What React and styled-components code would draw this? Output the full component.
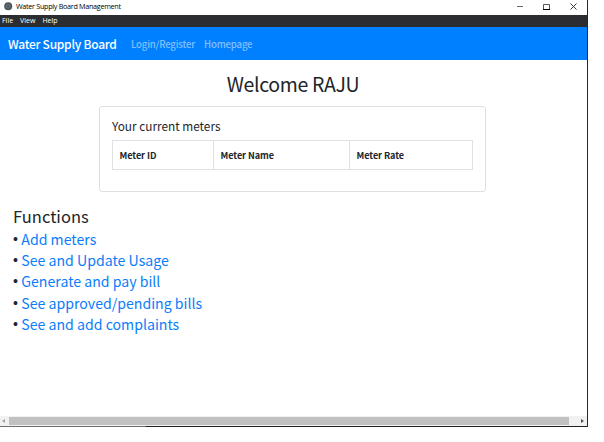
import React from "react";
import styled, { createGlobalStyle } from "styled-components";

const GlobalStyle = createGlobalStyle`
  * { box-sizing: border-box; }
  body {
    margin: 0;
    background: #fff;
    color: #212529;
    font-family: "Noto Sans CJK SC", "Noto Sans", sans-serif;
    overflow: hidden;
  }
`;

const AppWindow = styled.div`
  width: 588px;
  height: 427px;
  display: flex;
  flex-direction: column;
  background: #fff;
  border-right: 1px solid #25272b;
`;

const TitleBar = styled.header`
  height: 15px;
  flex: none;
  display: flex;
  align-items: center;
  padding: 0 9px 3px 4px;
  color: #000;
  font: 7.2px/12px "Open Sans", sans-serif;
  letter-spacing: -0.29px;
`;

const Title = styled.span`
  flex: 1;
  margin-left: 3px;
`;

const Controls = styled.div`
  display: flex;
  gap: 18px;
  svg { display: block; }
`;

const MenuBar = styled.nav`
  height: 12px;
  flex: none;
  display: flex;
  gap: 7px;
  padding-left: 2px;
  background: #2b2d30;
  color: #fff;
  font: 7px/12px "Open Sans", sans-serif;
`;

const NavBar = styled.nav`
  height: 33px;
  flex: none;
  display: flex;
  align-items: center;
  padding-left: 8px;
  background: #0080ff;
`;

const Brand = styled.span`
  width: 123px;
  color: #fff;
  font-size: 12px;
  font-weight: 500;
  letter-spacing: -0.26px;
  line-height: 33px;
  white-space: nowrap;
`;

const NavLink = styled.a`
  width: 73px;
  color: rgba(255, 255, 255, 0.5);
  font-size: 9.6px;
  font-weight: 500;
  letter-spacing: -0.17px;
  line-height: 33px;
  padding-top: 1px;
`;

const Content = styled.main`
  flex: 1;
  min-height: 0;
  display: flex;
  flex-direction: column;
`;

const Welcome = styled.h1`
  margin: 9px 0 7px;
  padding-right: 1px;
  text-align: center;
  font-size: 19.5px;
  font-weight: 400;
  letter-spacing: -0.33px;
  line-height: 30px;
`;

const Card = styled.section`
  width: 387px;
  height: 86px;
  flex: none;
  margin-left: 99px;
  padding: 10px 12px;
  border: 1px solid #dfdfdf;
  border-radius: 3px;
`;

const CardTitle = styled.h2`
  margin: 0 0 6px;
  font-size: 11.8px;
  font-weight: 400;
  line-height: 17px;
`;

const MeterTable = styled.div`
  display: grid;
  grid-template-columns: 101px 136px 123px;
  width: 361px;
  height: 30px;
  border: 1px solid #dee2e6;
  border-left: 0;
`;

const HeaderCell = styled.div`
  padding-left: 6.5px;
  border-left: 1px solid #dee2e6;
  font-size: 9.1px;
  font-weight: 700;
  letter-spacing: -0.07px;
  line-height: 29px;
`;

const Functions = styled.section`
  margin: 12px 0 0 13px;
`;

const SectionTitle = styled.h2`
  margin: 0 0 1px;
  font-size: 16.5px;
  font-weight: 400;
  line-height: 24px;
`;

const FunctionRow = styled.div`
  display: flex;
  height: 21.2px;
  align-items: center;
  font-size: 14.13px;
  line-height: 21px;
`;

const Bullet = styled.span`
  width: 8.3px;
  font-family: "Liberation Sans", sans-serif;
`;

const FunctionLink = styled.a`
  color: #0a7dfa;
`;

const ScrollBar = styled.div`
  height: 10px;
  flex: none;
  display: flex;
  align-items: center;
  background: #f1f1f1;
`;

const Arrow = styled.svg`
  width: ${(p) => p.$width}px;
  height: 10px;
  flex: none;
`;

const Thumb = styled.div`
  width: 560px;
  height: 8px;
  background: #c1c1c1;
`;

const BottomEdge = styled.div`
  height: 1px;
  flex: none;
  background: linear-gradient(to right, #6e6e6e 145px, #1f2023 146px);
`;

const columns = ["Meter ID", "Meter Name", "Meter Rate"];
const functions = [
  "Add meters",
  "See and Update Usage",
  "Generate and pay bill",
  "See approved/pending bills",
  "See and add complaints",
];

export default function App() {
  return (
    <>
      <GlobalStyle />
      <AppWindow>
        <TitleBar>
          <svg width="9" height="9" viewBox="0 0 9 9">
            <circle cx="4.2" cy="4.3" r="4" fill="#4b565b" />
            <circle cx="4.2" cy="4.3" r="1.8" fill="none" stroke="#74858a" strokeWidth=".7" />
          </svg>
          <Title>Water Supply Board Management</Title>
          <Controls>
            <svg width="9" height="9" viewBox="0 0 9 9">
              <path d="M2 4.5h6" stroke="#666" />
            </svg>
            <svg width="9" height="9" viewBox="0 0 9 9">
              <path d="M1.5 7.5v-5h6v5" fill="none" stroke="#555" />
              <path d="M1 7.5h7" stroke="#000" />
            </svg>
            <svg width="9" height="9" viewBox="0 0 9 9">
              <path d="M1.5 1.5l6 6M7.5 1.5l-6 6" stroke="#222" strokeWidth=".9" />
            </svg>
          </Controls>
        </TitleBar>
        <MenuBar>
          <span>File</span>
          <span>View</span>
          <span>Help</span>
        </MenuBar>
        <NavBar>
          <Brand>Water Supply Board</Brand>
          <NavLink>Login/Register</NavLink>
          <NavLink>Homepage</NavLink>
        </NavBar>
        <Content>
          <Welcome>Welcome RAJU</Welcome>
          <Card>
            <CardTitle>Your current meters</CardTitle>
            <MeterTable>
              {columns.map((name) => (
                <HeaderCell key={name}>{name}</HeaderCell>
              ))}
            </MeterTable>
          </Card>
          <Functions>
            <SectionTitle>Functions</SectionTitle>
            {functions.map((name) => (
              <FunctionRow key={name}>
                <Bullet>•</Bullet>
                <FunctionLink>{name}</FunctionLink>
              </FunctionRow>
            ))}
          </Functions>
        </Content>
        <ScrollBar>
          <Arrow $width={9} viewBox="0 0 9 10">
            <path d="M5 3v4L2 5z" fill="#a3a3a3" />
          </Arrow>
          <Thumb />
          <Arrow $width={18} viewBox="0 0 18 10">
            <path d="M12 3v4l3-2z" fill="#505050" />
          </Arrow>
        </ScrollBar>
        <BottomEdge />
      </AppWindow>
    </>
  );
}
